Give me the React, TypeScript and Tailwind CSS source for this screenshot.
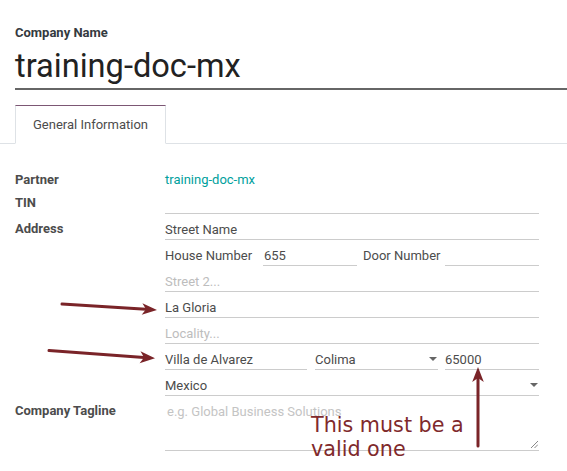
import React from "react";

type Pt = [number, number];

function Arrow({ from, to, len = 15, hw = 6, notch = 4 }: { from: Pt; to: Pt; len?: number; hw?: number; notch?: number }) {
  const dx = to[0] - from[0];
  const dy = to[1] - from[1];
  const d = Math.sqrt(dx * dx + dy * dy);
  const ux = dx / d;
  const uy = dy / d;
  const nx = -uy;
  const ny = ux;
  const bx = to[0] - ux * len;
  const by = to[1] - uy * len;
  const p1: Pt = [bx + nx * hw, by + ny * hw];
  const p2: Pt = [bx - nx * hw, by - ny * hw];
  const nP: Pt = [to[0] - ux * (len - notch), to[1] - uy * (len - notch)];
  const color = "#7a2428";
  return (
    <g>
      <line x1={from[0]} y1={from[1]} x2={nP[0]} y2={nP[1]} stroke={color} strokeWidth={3} strokeLinecap="round" />
      <polygon points={`${to[0]},${to[1]} ${p1[0]},${p1[1]} ${nP[0]},${nP[1]} ${p2[0]},${p2[1]}`} fill={color} />
    </g>
  );
}

function Caret() {
  return <div className="w-0 h-0 border-x-[4px] border-x-transparent border-t-[4px] border-t-[#666] mb-[8px] mr-[1px]" />;
}

export default function App() {
  return (
    <div className="relative w-[567px] h-[471px] overflow-hidden bg-white font-['Roboto','Noto_Sans',sans-serif] text-[#4c4c4c]">
      {/* Title */}
      <div className="pt-[25px] pl-[15px]">
        <div className="text-[13px] leading-[16px] font-bold text-[#343a40]">Company Name</div>
        <div className="mt-[5px] text-[32.6px] leading-[40px] pb-[2px] border-b-2 border-[#666] text-[#222]">training-doc-mx</div>
      </div>

      {/* Tabs */}
      <div className="mt-[15px] flex pl-[15px] border-b border-[#dee2e6]">
        <div className="-mb-px h-[39px] w-[151px] border border-[#dee2e6] border-t-[#7c5774] border-b-white bg-white flex items-center justify-center text-[13px] text-[#4c4c4c]">
          General Information
        </div>
      </div>

      {/* Fields */}
      <div className="mt-[24px] pl-[15px] text-[13px]">
        {/* Partner */}
        <div className="flex">
          <div className="w-[150px] h-[20px] pt-[3px] leading-[18px] font-bold">Partner</div>
          <div className="w-[374px] h-[20px] pt-[3px] leading-[18px] text-[#00a09d]">training-doc-mx</div>
        </div>

        {/* TIN */}
        <div className="flex">
          <div className="w-[150px] h-[26px] flex items-end pb-[2px]">
            <span className="leading-[18px] font-bold">TIN</span>
          </div>
          <div className="w-[374px] h-[26px] border-b border-[#ccc]" />
        </div>

        {/* Address */}
        <div className="flex">
          <div className="w-[150px] h-[26px] flex items-end pb-[2px]">
            <span className="leading-[18px] font-bold">Address</span>
          </div>
          <div className="w-[374px] flex flex-col">
            <div className="h-[26px] border-b border-[#ccc] flex items-end">
              <span className="leading-[18px]">Street Name</span>
            </div>
            <div className="h-[26px] flex items-end">
              <div className="w-[98px] h-[26px] flex items-end pb-[1px]">
                <span className="leading-[18px]">House Number</span>
              </div>
              <div className="w-[94px] h-[26px] border-b border-[#ccc] flex items-end pl-[1px]">
                <span className="leading-[18px]">655</span>
              </div>
              <div className="w-[88px] h-[26px] flex items-end pb-[1px] pl-[6px]">
                <span className="leading-[18px]">Door Number</span>
              </div>
              <div className="w-[94px] h-[26px] border-b border-[#ccc]" />
            </div>
            <div className="h-[26px] border-b border-[#ccc] flex items-end">
              <span className="leading-[18px] text-[#bdbdbd]">Street 2...</span>
            </div>
            <div className="h-[26px] border-b border-[#ccc] flex items-end">
              <span className="leading-[18px]">La Gloria</span>
            </div>
            <div className="h-[26px] border-b border-[#ccc] flex items-end">
              <span className="leading-[18px] text-[#bdbdbd]">Locality...</span>
            </div>
            <div className="h-[26px] flex">
              <div className="w-[142px] h-[26px] border-b border-[#ccc] flex items-end">
                <span className="leading-[18px]">Villa de Alvarez</span>
              </div>
              <div className="w-[8px]" />
              <div className="w-[123px] h-[26px] border-b border-[#ccc] flex items-end justify-between">
                <span className="leading-[18px]">Colima</span>
                <Caret />
              </div>
              <div className="w-[7px]" />
              <div className="w-[94px] h-[26px] border-b border-[#ccc] flex items-end">
                <span className="leading-[18px]">65000</span>
              </div>
            </div>
            <div className="h-[26px] border-b border-[#ccc] flex items-end justify-between">
              <span className="leading-[18px]">Mexico</span>
              <Caret />
            </div>
          </div>
        </div>

        {/* Tagline */}
        <div className="flex">
          <div className="w-[150px] pt-[6px] leading-[18px] font-bold">Company Tagline</div>
          <div className="relative w-[374px] h-[55px] border-b border-[#ccc] pt-[7px] pl-[2px] leading-[18px] text-[#c4c4c4]">
            e.g. Global Business Solutions
            <svg className="absolute right-[1px] bottom-[2px]" width="8" height="8" viewBox="0 0 8 8">
              <line x1="1" y1="8" x2="8" y2="1" stroke="#888" strokeWidth="1" />
              <line x1="4.5" y1="8" x2="8" y2="4.5" stroke="#888" strokeWidth="1" />
            </svg>
          </div>
        </div>
      </div>

      {/* Annotations */}
      <svg className="absolute left-0 top-0 pointer-events-none" width="567" height="471" viewBox="0 0 567 471">
        <Arrow from={[62, 304]} to={[157, 310]} len={15} hw={5.8} />
        <Arrow from={[49, 350.5]} to={[155, 358.3]} len={15} hw={6} />
        <Arrow from={[478, 446]} to={[478, 367]} len={15} hw={5.8} />
      </svg>
      <div className="absolute left-[311px] top-[413px] font-['DejaVu_Sans',sans-serif] text-[20.7px] leading-[24px] text-[#7f2a2c]">
        This must be a
        <br />
        valid one
      </div>
    </div>
  );
}
